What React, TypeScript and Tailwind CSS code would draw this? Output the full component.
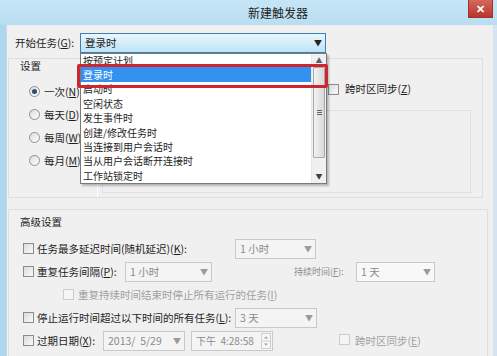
import * as React from "react";

const ITEMS = [
    "按预定计划",
    "登录时",
    "启动时",
    "空闲状态",
    "发生事件时",
    "创建/修改任务时",
    "当连接到用户会话时",
    "当从用户会话断开连接时",
    "工作站锁定时",
];

function Check({ disabled }: { disabled?: boolean }) {
    return (
        <span
            className={
                disabled
                    ? "inline-block w-[11px] h-[11px] shrink-0 border border-[#cdcdcd] bg-[#f5f5f5]"
                    : "inline-block w-[11px] h-[11px] shrink-0 border border-[#8c8c8c] bg-gradient-to-br from-[#dcdcdc] to-[#fafafa]"
            }
        />
    );
}

function Radio({ on }: { on?: boolean }) {
    return (
        <span className="flex items-center justify-center w-[11px] h-[11px] shrink-0 rounded-full border border-[#8e8f8f] bg-gradient-to-br from-[#dcdcdc] to-white">
            {on && <span className="w-[5px] h-[5px] rounded-full bg-[#2a4f74]" />}
        </span>
    );
}

function Combo({ text, className, spin }: { text: string; className: string; spin?: boolean }) {
    return (
        <div className={`flex items-center h-[20px] border border-[#c9c9c9] bg-[#f4f4f4] text-[#8a8a8a] text-[10.5px] pl-[4px] ${className}`}>
            <span className="flex-1 whitespace-pre overflow-hidden">{text}</span>
            {spin ? (
                <svg width="10" height="16" viewBox="0 0 10 16" className="mr-[1px] shrink-0">
                    <rect x="0.5" y="0.5" width="9" height="15" fill="#f6f6f6" stroke="#d0d0d0" />
                    <line x1="0.5" y1="8" x2="9.5" y2="8" stroke="#d0d0d0" />
                    <path d="M3 5.5 L5 3.5 L7 5.5 Z" fill="#9a9a9a" />
                    <path d="M3 10.5 L5 12.5 L7 10.5 Z" fill="#9a9a9a" />
                </svg>
            ) : (
                <span className="w-[14px] text-[8px] text-center text-[#9a9a9a]">▼</span>
            )}
        </div>
    );
}

export default function App() {
    return (
        <div className="relative w-[497px] h-[356px] overflow-hidden flex flex-col bg-[#f0f0f0] font-['Noto_Sans_CJK_SC',sans-serif] text-[10.5px] text-[#1e1e1e]">
            {/* Title bar */}
            <div className="h-[25px] shrink-0 flex items-center bg-gradient-to-b from-[#c6e6f6] to-[#b9def1] pl-[248px] text-[12px] text-[#222]">
                新建触发器
            </div>
            <div className="absolute right-[4px] top-0 w-[25px] h-[18px] flex items-center justify-center bg-gradient-to-b from-[#d7675c] to-[#b8342a] border border-[#a3322a] border-t-0 text-white text-[11px] font-bold leading-none">
                ✕
            </div>

            {/* Body */}
            <div className="flex-1 flex border-l-[6px] border-l-[#aed7ed] border-r-[4px] border-r-[#d6e4f1]">
                <div className="flex-1 flex flex-col border-l border-l-[#c6dbe7]">
                    {/* 开始任务 */}
                    <div className="mt-[8px] h-[20px] flex items-center pl-[8px]">
                        <span className="w-[65px]">开始任务(<span className="underline">G</span>):</span>
                        <div className="w-[246px] h-[20px] flex items-center border border-[#3c7fb1] bg-gradient-to-b from-[#eaf6fd] to-[#bde3f7] pl-[4px]">
                            <span className="flex-1">登录时</span>
                            <span className="w-[14px] text-[8px] text-center text-[#222]">▼</span>
                        </div>
                    </div>

                    {/* 设置 */}
                    <div className="mt-[5px] ml-[1px] w-[475px] h-[140px] flex flex-col border border-[#dedede]">
                        <div className="pl-[11px] leading-[14px]">设置</div>
                        <div className="flex-1 flex">
                            <div className="w-[88px] flex flex-col mt-[7px] pl-[20px]">
                                {[
                                    ["一次", "N"],
                                    ["每天", "D"],
                                    ["每周", "W"],
                                    ["每月", "M"],
                                ].map(([t, k], i) => (
                                    <div key={k} className="h-[23px] flex items-center gap-[4px]">
                                        <Radio on={i === 0} />
                                        <span>
                                            {t}(<span className="underline">{k}</span>)
                                        </span>
                                    </div>
                                ))}
                            </div>
                            <div className="w-px mt-[10px] bg-[#d6d6d6] border-r border-r-white" />
                            <div className="flex-1 flex flex-col">
                                <div className="mt-[8px] h-[16px] flex items-center gap-[6px] pl-[230px]">
                                    <Check />
                                    <span>跨时区同步(<span className="underline">Z</span>)</span>
                                </div>
                                <div className="mt-[13px] ml-[4px] w-[369px] h-[83px] border border-[#e0e0e0]" />
                            </div>
                        </div>
                    </div>

                    {/* 高级设置 */}
                    <div className="mt-[11px] ml-[1px] w-[480px] flex-1 flex flex-col border border-b-0 border-[#dedede]">
                        <div className="mt-[5px] pl-[11px] leading-[14px]">高级设置</div>
                        <div className="mt-[8px] flex flex-col pl-[14px]">
                            <div className="h-[23px] flex items-center">
                                <Check />
                                <span className="ml-[3px] w-[198px]">
                                    任务最多延迟时间(随机延迟)(<span className="underline">K</span>):
                                </span>
                                <Combo text="1 小时" className="w-[81px]" />
                            </div>
                            <div className="h-[23px] flex items-center">
                                <Check />
                                <span className="ml-[3px] w-[88px]">
                                    重复任务间隔(<span className="underline">P</span>):
                                </span>
                                <Combo text="1 小时" className="w-[87px]" />
                                <span className="ml-[82px] w-[62px] text-[9px] text-[#8c8c8c]">
                                    持续时间(<span className="underline">F</span>):
                                </span>
                                <Combo text="1 天" className="w-[79px] bg-[#f8f8f8]" />
                            </div>
                            <div className="h-[23px] flex items-center pl-[40px] text-[#a0a0a0]">
                                <Check disabled />
                                <span className="ml-[4px]">
                                    重复持续时间结束时停止所有运行的任务(<span className="underline">I</span>)
                                </span>
                            </div>
                            <div className="h-[23px] flex items-center">
                                <Check />
                                <span className="ml-[3px] w-[198px]">
                                    停止运行时间超过以下时间的所有任务(<span className="underline">L</span>):
                                </span>
                                <Combo text="3 天" className="w-[82px]" />
                            </div>
                            <div className="h-[23px] flex items-center">
                                <Check />
                                <span className="ml-[3px] w-[66px]">
                                    过期日期(<span className="underline">X</span>):
                                </span>
                                <Combo text="2013/  5/29" className="w-[82px]" />
                                <Combo text="下午  4:28:58" spin className="ml-[6px] w-[82px] text-[10px]" />
                                <span className="ml-[66px]">
                                    <Check disabled />
                                </span>
                                <span className="ml-[5px] text-[#a0a0a0]">
                                    跨时区同步(<span className="underline">E</span>)
                                </span>
                            </div>
                        </div>
                    </div>
                </div>
            </div>

            {/* Dropdown list */}
            <div className="absolute left-[80px] top-[53px] w-[247px] h-[131px] flex overflow-hidden border border-[#7a7a7a] bg-white shadow-[2px_2px_2px_rgba(0,0,0,0.25)] text-[10px]">
                <div className="flex-1 flex flex-col -mt-[1px]">
                    {ITEMS.map((t, i) => (
                        <div
                            key={t}
                            className={
                                i === 1
                                    ? "h-[14.4px] shrink-0 flex items-center pl-[2px] bg-[#3591f0] text-white"
                                    : "h-[14.4px] shrink-0 flex items-center pl-[2px]"
                            }
                        >
                            {t}
                        </div>
                    ))}
                </div>
                <div className="w-[15px] flex flex-col bg-[#f0f0f0] border-l border-[#e6e6e6]">
                    <div className="h-[13px] text-[7px] text-center text-[#606060] leading-[13px]">▲</div>
                    <div className="mx-[1px] h-[91px] flex items-center justify-center rounded-[1px] border border-[#a9a9a9] bg-gradient-to-r from-[#f2f2f2] to-[#d8d8d8]">
                        <span className="flex flex-col gap-[1px]">
                            <span className="w-[5px] h-px bg-[#666]" />
                            <span className="w-[5px] h-px bg-[#666]" />
                            <span className="w-[5px] h-px bg-[#666]" />
                        </span>
                    </div>
                    <div className="flex-1" />
                    <div className="h-[14px] text-[7px] text-center text-[#404040] leading-[14px]">▼</div>
                </div>
            </div>

            {/* Red highlight */}
            <div className="absolute left-[77px] top-[64px] w-[251px] h-[24px] border-[3px] border-[#cc2631] rounded-[2px]" />
        </div>
    );
}
